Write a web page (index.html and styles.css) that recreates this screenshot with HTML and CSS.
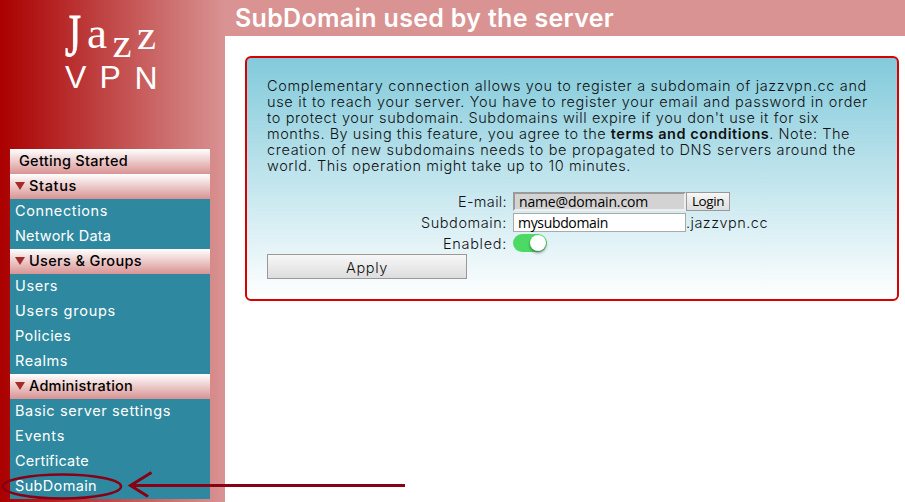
FILE: index.html
```
<!DOCTYPE html>
<html lang="en">
<head>
<meta charset="utf-8">
<title>Jazz VPN</title>
<link rel="stylesheet" href="styles.css">
</head>
<body>
<div class="app">
  <aside class="sidebar">
    <svg class="logo" width="200" height="149" viewBox="10 0 200 149" role="img" aria-label="Jazz VPN">
      <g class="logo-serif">
        <text class="cap" x="65" y="55.500" font-size="62" textLength="16" lengthAdjust="spacingAndGlyphs">J</text>
        <text x="87" y="48" font-size="44" textLength="20" lengthAdjust="spacingAndGlyphs">a</text>
        <text x="112.500" y="56.500" font-size="43">z</text>
        <text x="137" y="48.500" font-size="43">z</text>
      </g>
      <g class="logo-sans">
        <text x="65" y="88" font-size="32">V</text>
        <text x="99.500" y="88" font-size="32">P</text>
        <text x="134.500" y="89" font-size="32">N</text>
      </g>
    </svg>
    <nav class="menu">
      <a class="head start"><span data-w="109">Getting Started</span></a>
      <a class="head"><i class="tri"></i><span data-w="48">Status</span></a>
      <a class="item"><span data-w="93">Connections</span></a>
      <a class="item"><span data-w="96">Network Data</span></a>
      <a class="head"><i class="tri"></i><span data-w="113">Users &amp; Groups</span></a>
      <a class="item"><span data-w="43">Users</span></a>
      <a class="item"><span data-w="101">Users groups</span></a>
      <a class="item"><span data-w="56">Policies</span></a>
      <a class="item"><span data-w="53">Realms</span></a>
      <a class="head"><i class="tri"></i><span data-w="104">Administration</span></a>
      <a class="item"><span data-w="156">Basic server settings</span></a>
      <a class="item"><span data-w="50">Events</span></a>
      <a class="item"><span data-w="74">Certificate</span></a>
      <a class="item"><span data-w="82">SubDomain</span></a>
    </nav>
  </aside>
  <main class="main">
    <h1 class="title"><span data-w="379">SubDomain used by the server</span></h1>
    <section class="panel">
      <p class="intro">
        <span data-w="600">Complementary connection allows you to register a subdomain of jazzvpn.cc and</span><br>
        <span data-w="601">use it to reach your server. You have to register your email and password in order</span><br>
        <span data-w="552">to protect your subdomain. Subdomains will expire if you don't use it for six</span><br>
        <span data-w="583">months. By using this feature, you agree to the <b>terms and conditions</b>. Note: The</span><br>
        <span data-w="589">creation of new subdomains needs to be propagated to DNS servers around the</span><br>
        <span data-w="364">world. This operation might take up to 10 minutes.</span>
      </p>
      <div class="form">
        <label><span data-w="49">E-mail:</span></label>
        <div class="field"><div class="input disabled"><span data-w="129">name@domain.com</span></div><div class="login"><span data-w="32">Login</span></div></div>
        <label><span data-w="86">Subdomain:</span></label>
        <div class="field"><div class="input"><span data-w="90">mysubdomain</span></div><span data-w="82">.jazzvpn.cc</span></div>
        <label><span data-w="64">Enabled:</span></label>
        <div class="field"><div class="toggle"></div></div>
      </div>
      <div class="apply"><span data-w="42">Apply</span></div>
    </section>
  </main>
</div>
<svg class="pointer" width="410" height="40" viewBox="0 462 410 40" aria-hidden="true">
  <ellipse cx="62" cy="486.500" rx="59" ry="12"/>
  <path d="M405 485.500H131M151.500 472.500L130.500 485.500L148 496.500"/>
</svg>
<script src="fit.js"></script>
</body>
</html>
```

FILE: styles.css
```
* { box-sizing: border-box; }
body {
  margin: 0;
  height: 502px;
  overflow: hidden;
  position: relative;
  background: #fff;
  color: #111;
  font-family: Inter, "Liberation Sans", sans-serif;
  font-size: 14.5px;
}
.app { display: flex; height: 502px; }
.sidebar {
  width: 225px;
  flex: none;
  padding-left: 10px;
  background: linear-gradient(to right, #a00, #d99393);
}
.logo { display: block; }
.logo text { fill: #fff; }
.logo-serif { font-family: "Liberation Serif", serif; }
.logo-serif .cap { stroke: #fff; stroke-width: .8; }
.logo-sans { font-family: "Liberation Sans", sans-serif; }
.menu { width: 200px; }
.menu a { display: flex; align-items: center; height: 25px; padding: 0 0 2px 5px; }
[data-w] { white-space: nowrap; }
.head {
  background: linear-gradient(#fff, #d99393);
  color: #000;
  font-weight: 500;
}
.menu .start { padding-left: 9px; }
.item { background: #2e89a0; color: #fff; font-weight: 400; }
.tri {
  margin-right: 4px;
  border: 5px solid transparent;
  border-top: 8px solid #a52a2a;
  border-bottom: 0;
}
.main { flex: 1; }
.title {
  margin: 0;
  height: 36px;
  padding-left: 10px;
  background: #d99393;
  color: #fff;
  font-size: 25px;
  line-height: 36px;
  font-weight: 600;
}
.panel {
  margin: 20px 6px 0 20px;
  height: 245px;
  padding: 20px;
  border: 2px solid #d80000;
  border-radius: 6px;
  background: linear-gradient(#82cadb, #fff);
}
.intro { margin: 0; line-height: 16px; font-weight: 300; }
.intro b { font-weight: 600; }
.form {
  display: grid;
  grid-template-columns: 240px 1fr;
  grid-template-rows: 21px 21px 20px;
  column-gap: 6px;
  margin-top: 18px;
  font-weight: 300;
}
.form label { text-align: right; line-height: 19px; }
.field { display: flex; line-height: 19px; }
.input {
  width: 173px;
  height: 19px;
  padding-left: 4px;
  background: #fff;
  border: 1px solid #aaa;
  color: #000;
  font: 400 14px/17px "Open Sans", sans-serif;
}
.input.disabled {
  background: #d3d3d3;
  border: 2px inset #eee;
  line-height: 16px;
}
.login {
  width: 44px;
  height: 19px;
  border: 1px solid #999;
  background: linear-gradient(#f7f7f7, #ddd);
  color: #000;
  font: 400 13.5px/17px "Open Sans", sans-serif;
  text-align: center;
}
.toggle {
  width: 34px;
  height: 18px;
  padding: 1px;
  border-radius: 9px;
  background: #4cd964;
}
.toggle::after {
  content: "";
  display: block;
  width: 16px;
  height: 16px;
  margin-left: 16px;
  border-radius: 50%;
  background: #fff;
  box-shadow: 0 2px 3px rgba(0, 0, 0, .4);
}
.apply {
  width: 200px;
  height: 25px;
  border: 1px solid #999;
  background: linear-gradient(#f7f7f7, #ddd);
  line-height: 25px;
  font-weight: 300;
  text-align: center;
}
.pointer {
  position: absolute;
  left: 0;
  bottom: 0;
  fill: none;
  stroke: #880015;
  stroke-width: 3;
}
.pointer ellipse { stroke-width: 2.5; }
```

FILE: fit.js
```
// Spread each label over its intended width by adjusting the tracking.
document.querySelectorAll('[data-w]').forEach(function (el) {
  var gap = Number(el.dataset.w) - el.getBoundingClientRect().width;
  el.style.letterSpacing = gap / el.textContent.length + 'px';
});
```
